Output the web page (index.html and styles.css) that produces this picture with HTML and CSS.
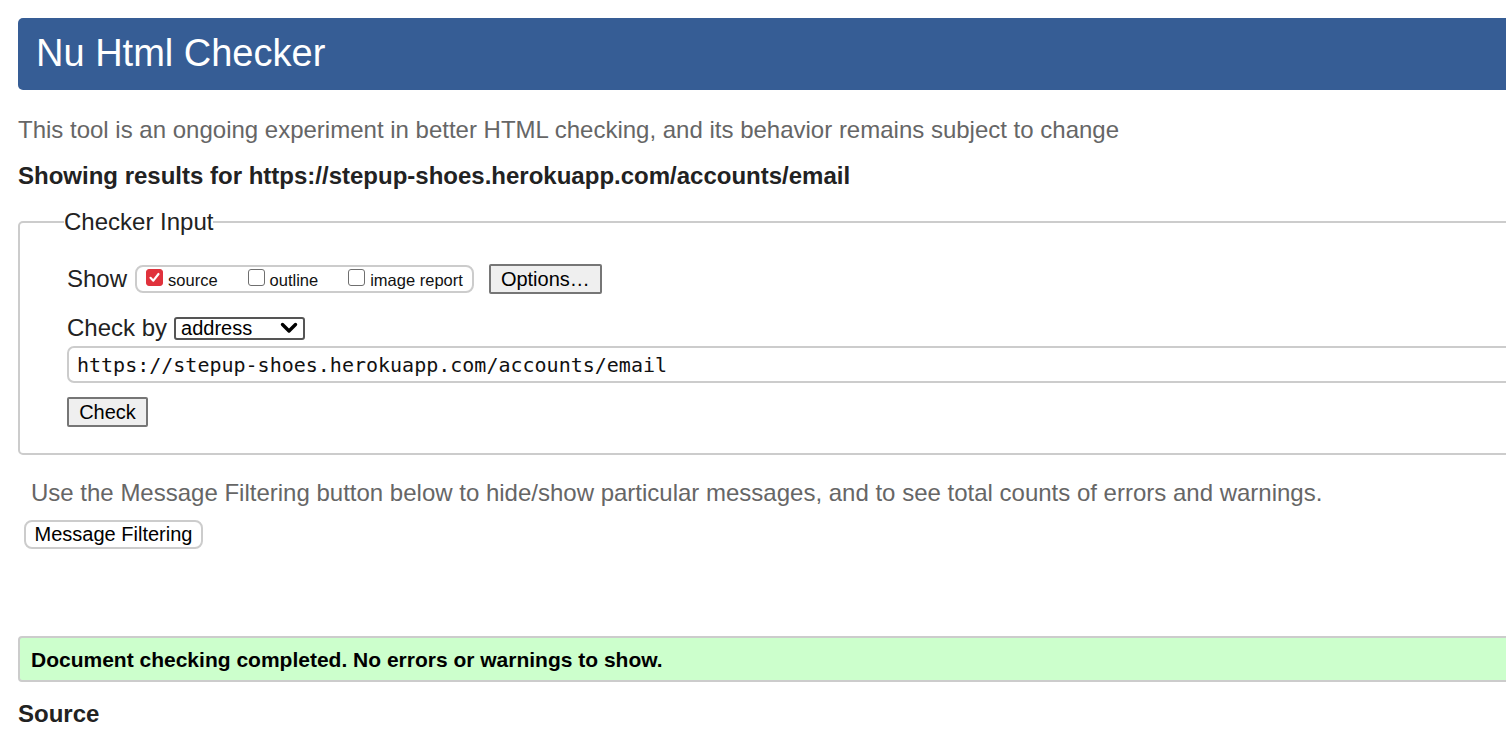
FILE: index.html
```html
<!DOCTYPE html>
<html lang="en">
<head>
<meta charset="utf-8">
<title>Nu Html Checker</title>
<link rel="stylesheet" href="styles.css">
</head>
<body>
<div class="page">
  <h1 class="banner">Nu Html Checker</h1>
  <p class="intro">This tool is an ongoing experiment in better HTML checking, and its behavior remains subject to change</p>
  <p class="results-for">Showing results for https://stepup-shoes.herokuapp.com/accounts/email</p>
  <fieldset class="checker">
    <legend>Checker Input</legend>
    <div class="row show-row">
      <span class="lbl">Show</span>
      <span class="opts">
        <label class="opt"><span class="cb checked"><svg viewBox="0 0 18 18" width="18" height="18"><path d="M4.2 9.4 L7.6 12.8 L13.8 4.8" fill="none" stroke="#fff" stroke-width="2.6" stroke-linecap="round" stroke-linejoin="round"/></svg></span>source</label>
        <label class="opt"><span class="cb"></span>outline</label>
        <label class="opt"><span class="cb"></span>image report</label>
      </span>
      <button class="btn btn-grey btn-options" type="button">Options…</button>
    </div>
    <div class="row by-row">
      <span class="lbl">Check by</span>
      <span class="select">address<svg class="chev" viewBox="0 0 18 12" width="18" height="12"><path d="M2.5 2.5 L9 9 L15.5 2.5" fill="none" stroke="#000" stroke-width="3.4" stroke-linecap="round" stroke-linejoin="round"/></svg></span>
    </div>
    <div class="url">https://stepup-shoes.herokuapp.com/accounts/email</div>
    <div class="row"><button class="btn btn-grey btn-check" type="button">Check</button></div>
  </fieldset>
  <p class="filter-note">Use the Message Filtering button below to hide/show particular messages, and to see total counts of errors and warnings.</p>
  <button class="btn btn-white" type="button">Message Filtering</button>
  <div class="success">Document checking completed. No errors or warnings to show.</div>
  <h2 class="source">Source</h2>
</div>
</body>
</html>
```
FILE: styles.css
```css
html, body {
  margin: 0;
  padding: 0;
  overflow: hidden;
  background: #fff;
}
body {
  font-family: "Liberation Sans", Arial, sans-serif;
  color: #222;
}
.page {
  width: 1560px;
  padding: 18px 0 0 18px;
}
.banner {
  margin: 0;
  height: 72px;
  box-sizing: border-box;
  padding: 12px 18px 0;
  background: #365d95;
  color: #fff;
  font-weight: normal;
  font-size: 38px;
  line-height: 46px;
  border-radius: 5px;
}
.intro {
  margin: 26px 0 0;
  font-size: 24px;
  line-height: 28px;
  color: #666;
}
.results-for {
  margin: 18px 0 0;
  font-size: 24px;
  line-height: 28px;
  font-weight: bold;
  color: #222;
}
.checker {
  margin: 18px 0 0;
  padding: 28px 0 26px 47px;
  border: 2px solid #ccc;
  border-radius: 5px;
  min-width: 0;
}
.checker legend {
  padding: 0;
  margin-left: -3px;
  font-size: 24px;
  line-height: 28px;
  color: #222;
}
.row {
  display: flex;
  align-items: center;
}
.lbl {
  font-size: 24px;
  line-height: 28px;
  color: #222;
}
.show-row {
  height: 30px;
}
.opts {
  display: flex;
  align-items: center;
  margin-left: 8px;
  height: 28px;
  box-sizing: border-box;
  padding: 0 9px 0 9px;
  border: 2px solid #ccc;
  border-radius: 8px;
}
.opt {
  display: flex;
  align-items: center;
  font-size: 16.5px;
  color: #111;
  margin-right: 30px;
  padding-top: 3px;
}
.opt:last-child { margin-right: 0; }
.cb {
  width: 17px;
  height: 17px;
  box-sizing: border-box;
  border: 1.5px solid #6f6f6f;
  border-radius: 3px;
  margin-right: 5px;
  margin-top: -6px;
  background: #fff;
  display: flex;
  align-items: center;
  justify-content: center;
}
.cb.checked {
  background: #e0323c;
  border-color: #e0323c;
}
.cb svg { width: 17px; height: 17px; }
.btn {
  font-family: "Liberation Sans", Arial, sans-serif;
  color: #000;
  cursor: pointer;
}
.btn-grey {
  background: #efefef;
  border: 2px solid #767676;
  border-radius: 2px;
  font-size: 20px;
  height: 30px;
  padding: 0 12px;
}
.btn-options {
  margin-left: 15px;
  width: 113px;
  padding: 0;
}
.by-row {
  margin-top: 20px;
}
.select {
  display: flex;
  align-items: center;
  justify-content: space-between;
  margin-left: 7px;
  width: 131px;
  height: 23px;
  box-sizing: border-box;
  border: 2px solid #555;
  border-radius: 3px;
  padding: 0 5px 0 5px;
  font-size: 20px;
  color: #000;
}
.chev {
  width: 18px;
  height: 12px;
}
.url {
  margin-top: 4px;
  height: 37px;
  box-sizing: border-box;
  border: 2px solid #ccc;
  border-radius: 7px;
  padding: 6px 8px;
  font-family: "DejaVu Sans Mono", "Liberation Mono", monospace;
  font-size: 20px;
  line-height: 23px;
  color: #111;
}
.btn-check {
  margin-top: 14px;
  width: 81px;
  padding: 0;
}
.filter-note {
  margin: 24px 0 0 13px;
  font-size: 24px;
  line-height: 28px;
  color: #666;
}
.btn-white {
  display: block;
  margin: 13px 0 0 6px;
  background: #fff;
  border: 2px solid #ccc;
  border-radius: 8px;
  font-size: 20px;
  height: 29px;
  width: 179px;
  padding: 0;
}
.success {
  margin-top: 87px;
  height: 46px;
  box-sizing: border-box;
  padding: 10px 11px;
  background: #ccffcc;
  border: 2px solid #ccc;
  border-radius: 4px;
  font-weight: bold;
  font-size: 21px;
  line-height: 24px;
  color: #000;
}
.source {
  margin: 18px 0 0;
  font-size: 24px;
  line-height: 28px;
  color: #222;
}
```
